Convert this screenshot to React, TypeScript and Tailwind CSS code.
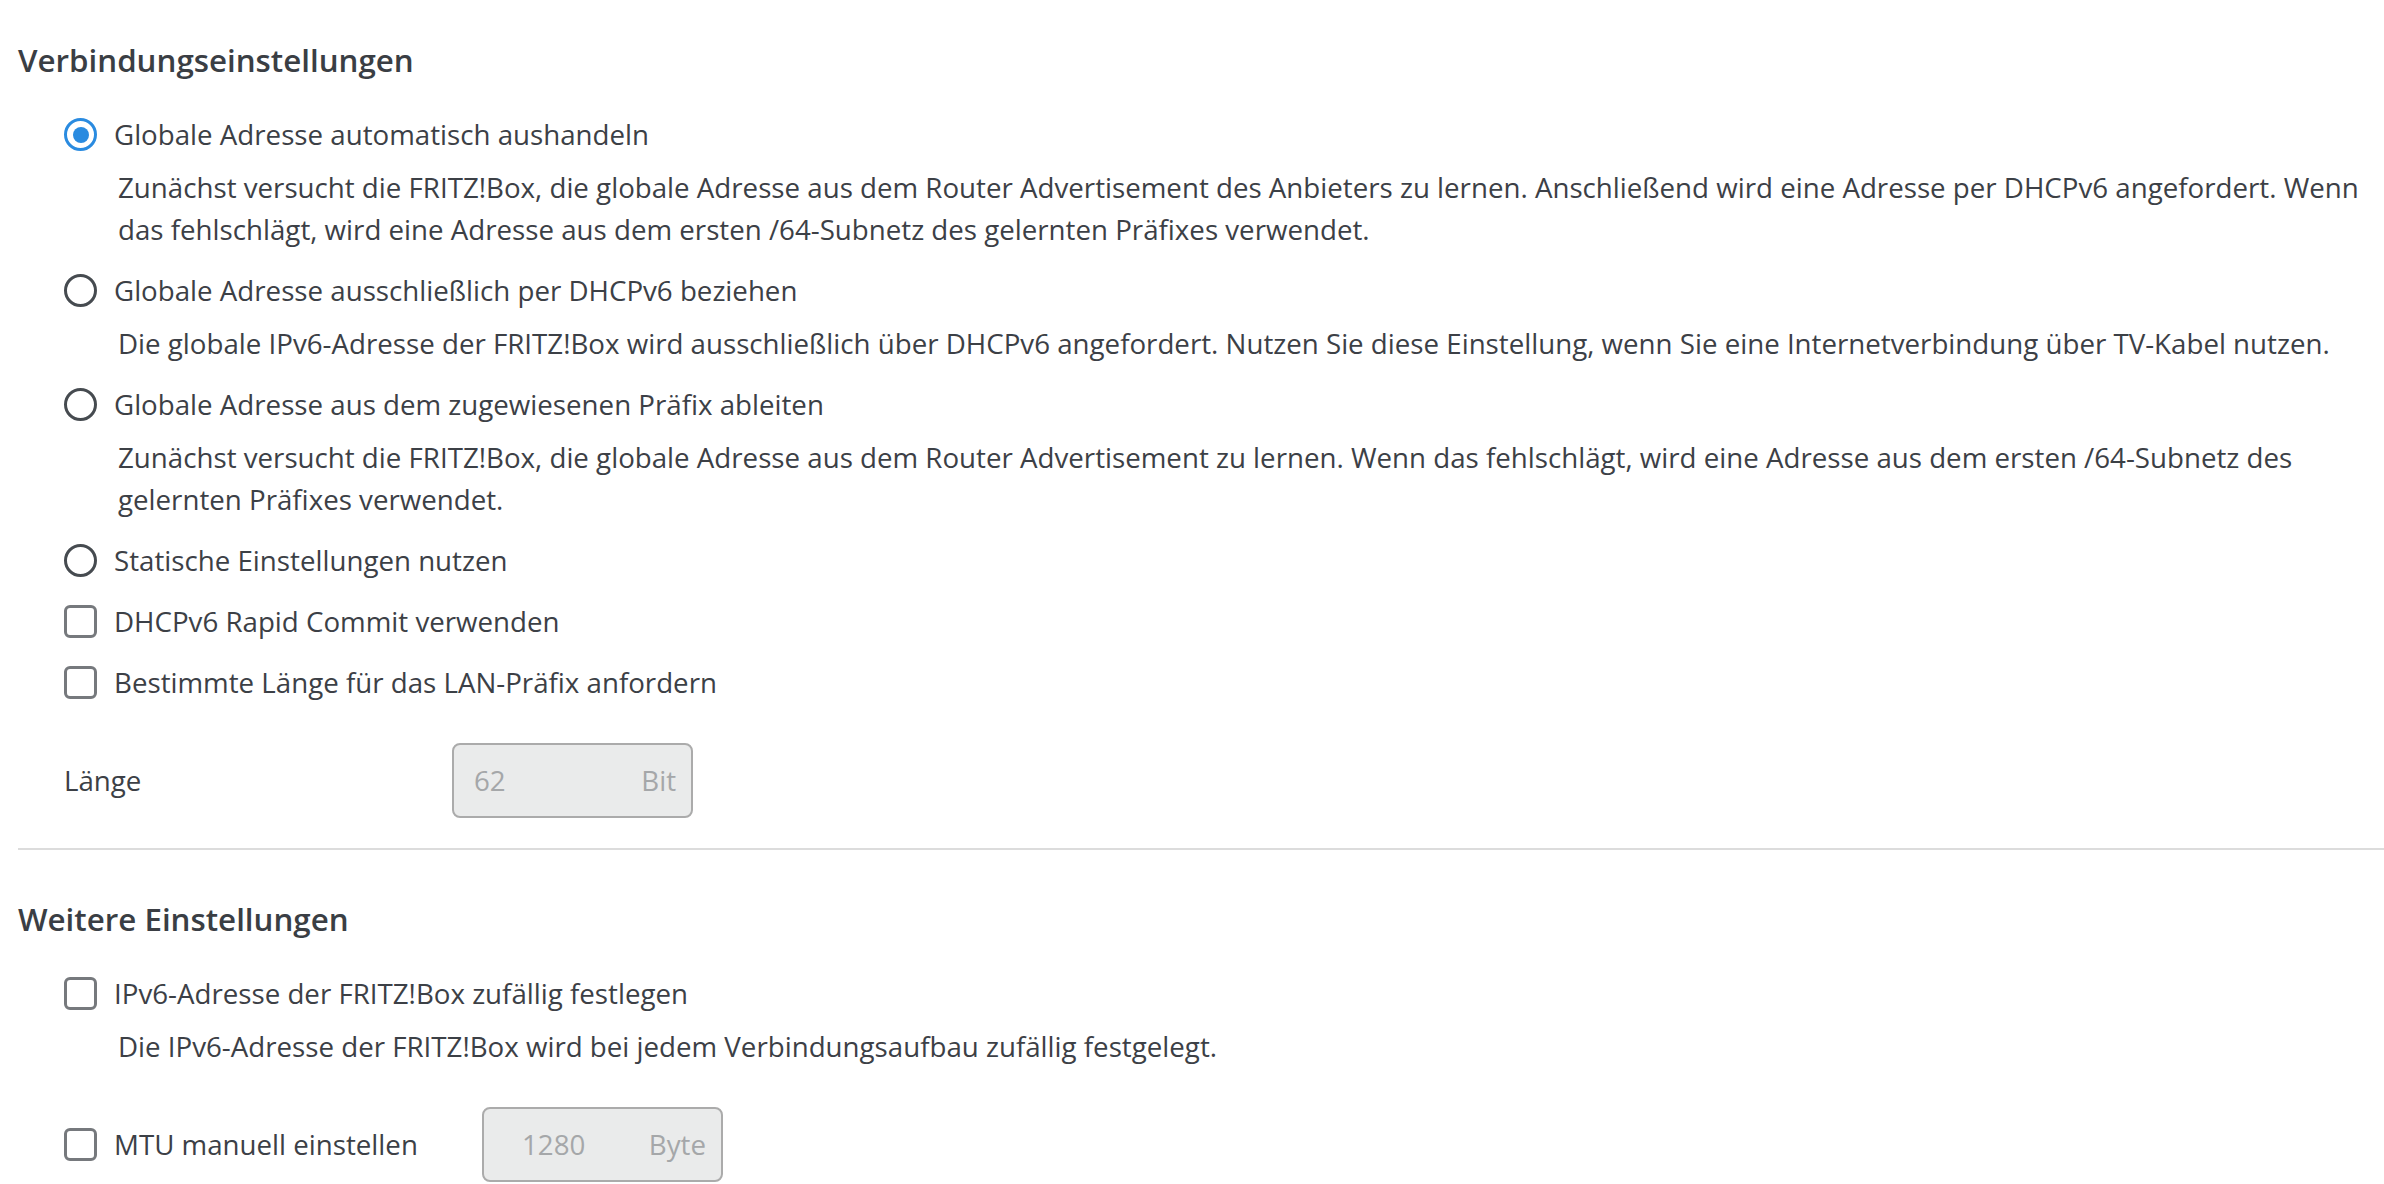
import { ReactNode } from "react";

const Radio = ({ checked }: { checked?: boolean }) =>
  checked ? (
    <span className="flex h-[33px] w-[33px] shrink-0 items-center justify-center rounded-full border-[3px] border-[#2a8be0]">
      <span className="h-[16px] w-[16px] rounded-full bg-[#2a8be0]" />
    </span>
  ) : (
    <span className="h-[33px] w-[33px] shrink-0 rounded-full border-[3px] border-[#464b50]" />
  );

const Check = () => (
  <span className="h-[33px] w-[33px] shrink-0 rounded-[6px] border-[3px] border-[#76797d]" />
);

const Option = ({
  control,
  label,
  desc,
  first,
}: {
  control: ReactNode;
  label: string;
  desc?: ReactNode;
  first?: boolean;
}) => (
  <div className={first ? "" : "mt-[20px]"}>
    <label className="flex h-[41px] items-center gap-[17px]">
      {control}
      <span className="whitespace-nowrap">{label}</span>
    </label>
    {desc && <p className="ml-[54px] mt-[11px] whitespace-nowrap leading-[42px]">{desc}</p>}
  </div>
);

const UnitInput = ({ value, unit, pad }: { value: string; unit: string; pad: string }) => (
  <div
    className={`flex h-[75px] w-[241px] shrink-0 items-center justify-between rounded-[8px] border-2 border-[#ababab] bg-[#eaebeb] pr-[15px] text-[#a5a7a9] ${pad}`}
  >
    <span>{value}</span>
    <span>{unit}</span>
  </div>
);

export default function App() {
  return (
    <div
      className="min-h-screen overflow-hidden bg-white pl-[18px] text-[27.7px] text-[#3c4046]"
      style={{ fontFamily: '"Open Sans", "Noto Sans", sans-serif' }}
    >
      <h2 className="pt-[40px] text-[31.3px] font-semibold leading-[40px] text-[#3a3e44]">
        Verbindungseinstellungen
      </h2>
      <div className="ml-[46px] mt-[34px]">
        <Option
          first
          control={<Radio checked />}
          label="Globale Adresse automatisch aushandeln"
          desc={
            <>
              Zunächst versucht die FRITZ!Box, die globale Adresse aus dem Router Advertisement des Anbieters zu lernen. Anschließend wird eine Adresse per DHCPv6 angefordert. Wenn
              <br />
              das fehlschlägt, wird eine Adresse aus dem ersten /64-Subnetz des gelernten Präfixes verwendet.
            </>
          }
        />
        <Option
          control={<Radio />}
          label="Globale Adresse ausschließlich per DHCPv6 beziehen"
          desc="Die globale IPv6-Adresse der FRITZ!Box wird ausschließlich über DHCPv6 angefordert. Nutzen Sie diese Einstellung, wenn Sie eine Internetverbindung über TV-Kabel nutzen."
        />
        <Option
          control={<Radio />}
          label="Globale Adresse aus dem zugewiesenen Präfix ableiten"
          desc={
            <>
              Zunächst versucht die FRITZ!Box, die globale Adresse aus dem Router Advertisement zu lernen. Wenn das fehlschlägt, wird eine Adresse aus dem ersten /64-Subnetz des
              <br />
              gelernten Präfixes verwendet.
            </>
          }
        />
        <Option control={<Radio />} label="Statische Einstellungen nutzen" />
        <Option control={<Check />} label="DHCPv6 Rapid Commit verwenden" />
        <Option control={<Check />} label="Bestimmte Länge für das LAN-Präfix anfordern" />
        <div className="mt-[40px] flex items-center">
          <span className="w-[388px]">Länge</span>
          <UnitInput value="62" unit="Bit" pad="pl-[20px]" />
        </div>
      </div>
      <div className="mt-[30px] h-[2px] bg-[#dcdcdc]" />

      <h2 className="pt-[49px] text-[31.3px] font-semibold leading-[40px] text-[#3a3e44]">
        Weitere Einstellungen
      </h2>
      <div className="ml-[46px] mt-[34px]">
        <Option
          first
          control={<Check />}
          label="IPv6-Adresse der FRITZ!Box zufällig festlegen"
          desc="Die IPv6-Adresse der FRITZ!Box wird bei jedem Verbindungsaufbau zufällig festgelegt."
        />
        <div className="mt-[40px] flex h-[75px] items-center">
          <label className="flex w-[418px] shrink-0 items-center gap-[17px]">
            <Check />
            <span className="whitespace-nowrap">MTU manuell einstellen</span>
          </label>
          <UnitInput value="1280" unit="Byte" pad="pl-[38px]" />
        </div>
      </div>
    </div>
  );
}
